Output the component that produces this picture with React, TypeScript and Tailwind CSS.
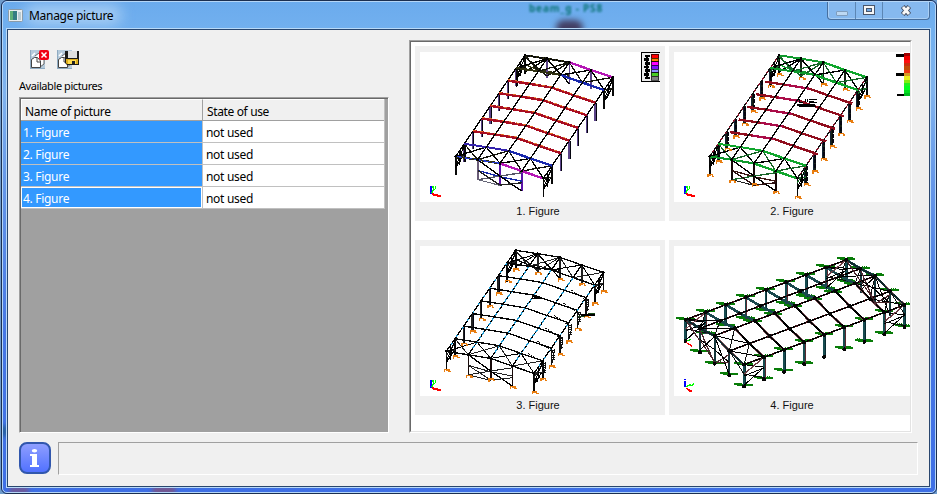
import React from "react";

type P = [number, number];

const lerp = (a: P, b: P, t: number): P => [a[0] + (b[0] - a[0]) * t, a[1] + (b[1] - a[1]) * t];
const path = (...pts: P[]) => "M" + pts.map((p) => p.join(",")).join("L");
const down = (p: P, h: number, dx = 0): P => [p[0] + dx, p[1] + h];

const Line = ({ pts, c = "#000", w = 4, dash }: { pts: P[]; c?: string; w?: number; dash?: string }) => (
  <path d={path(...pts)} stroke={c} strokeWidth={w} strokeDasharray={dash} fill="none" />
);

type Theme = {
  dx: number;
  rafter: string;
  rafterW: number;
  accent: string;
  end: string;
  endAlt: string;
  column: string;
  brace: string;
  feet: boolean;
  purlin?: string;
};

const bases: P[] = [[345, 46], [411, 56], [478, 67], [543, 90], [608, 112]];

// Axonometric view of the hall: nine frames, five nodes per frame.
function Hall({ t, kind }: { t: Theme; kind: 1 | 2 | 3 }) {
  const n = (i: number, k: number): P => [bases[i][0] - 26 * k + t.dx, bases[i][1] + 37.9 * k];
  const frame = (k: number) => [0, 1, 2, 3, 4].map((i) => n(i, k));
  const foot = (p: P, key: string) => (
    <path key={key} d={`M${p[0] - 5},${p[1] + 7}v-8h13v5h6M${p[0] - 2},${p[1]}h7`} stroke="#e87d10" strokeWidth={4} fill="none" />
  );
  const feet: P[] = [];
  for (let k = 1; k < 8; k++) feet.push(down(n(0, k), 53), down(n(4, k), 55));
  [0, 1, 2, 3, 4].forEach((i) => feet.push(down(n(i, 0), i === 2 ? 66 : 57), down(n(i, 8), i === 0 ? 56 : i === 4 ? 56 : 63)));
  const off = kind === 2 ? 9 : 0;
  const wallW = kind === 3 ? 3 : 4;
  return (
    <g>
      {/* side columns */}
      {[1, 2, 3, 4, 5, 6, 7].map((k) => (
        <g key={k}>
          {[0, 4].map((i) => {
            const p = n(i, k);
            return (
              <g key={i}>
                {kind === 3 && i === 4 && k > 1 ? (
                  <>
                    <path d={path(p, down(p, 52))} stroke="#111" strokeWidth={4} />
                    <path d={path(down(p, 4, 9), down(p, 25, 7), down(p, 48, 1))} stroke="#111" strokeWidth={3} fill="none" />
                    {[7, 14, 21, 28, 35].map((h) => <path key={h} d={path(down(p, h, -2), down(p, h, 10))} stroke="#111" strokeWidth={3} />)}
                    <path d={path(down(n(3, k), 0, 22), down(p, 10, 5))} stroke="#111" strokeWidth={3} strokeDasharray="5 3" />
                  </>
                ) : (
                  <>
                    <path d={path(p, down(p, 54))} stroke={t.column} strokeWidth={7} />
                    <path d={path(down(p, 2, 2), down(p, 54, 2))} stroke="#050510" strokeWidth={kind === 2 ? 6 : 3} strokeDasharray={kind === 2 ? "12 4" : undefined} />
                    {kind === 2 && <path d={path(down(p, 4, -3), down(p, 52, -4))} stroke="#123" strokeWidth={3} />}
                  </>
                )}
              </g>
            );
          })}
        </g>
      ))}
      {/* lattice of the corner bays */}
      {[[0, 0], [0, 7], [4, 0], [4, 7]].map(([i, k]) => {
        const a = n(i, k), b = n(i, k + 1);
        return (
          <g key={`${i}${k}`}>
            <Line pts={[a, down(a, 56)]} w={5} c="#080808" />
            <Line pts={[b, down(b, 56)]} w={5} c="#080808" />
            <Line pts={[down(a, 12), down(b, 12)]} c={t.brace} w={3} />
            <Line pts={[down(a, 31), down(b, 31)]} w={3} />
            <Line pts={[down(a, 5), down(b, 30)]} w={3} />
            <Line pts={[b, down(a, 34)]} c={t.brace} w={4} />
            <Line pts={[down(b, 34), lerp(down(a, 34), down(b, 34), 0.4), lerp(a, b, 0.5), down(lerp(a, b, 0.55), 42)]} w={3} />
          </g>
        );
      })}
      {/* gable walls */}
      <Line pts={[down(n(0, 0), 44), down(n(1, 0), 36), down(n(2, 0), 44)]} c={t.endAlt} w={3} />
      {[1, 2, 3].map((i) => <Line key={i} pts={[n(i, 0), down(n(i, 0), i === 2 ? 66 : 58)]} c={t.column} w={5} />)}
      {[1, 2, 3].map((i) => <Line key={i} pts={[n(i, 8), down(n(i, 8), i === 2 ? 66 : 61)]} c={kind === 1 ? (i === 1 ? "#6a5c78" : "#5b13a8") : "#160808"} w={5} />)}
      <Line pts={[down(n(1, 8), 32), down(n(2, 8), 40), down(n(3, 8), 30)]} c={kind === 1 ? "#1528a8" : kind === 2 ? "#3a1512" : t.brace} w={wallW} />
      <Line pts={[down(n(1, 8), 60), down(n(2, 8), 38), down(n(3, 8), 5)]} c={kind === 1 ? "#556" : t.brace} w={wallW} />
      <Line pts={[n(1, 8), down(n(2, 8), 38), down(n(3, 8), 60)]} w={4} />
      <Line pts={[down(n(1, 8), 32), down(n(2, 8), 65), down(n(3, 8), 35)]} c={kind === 1 ? "#222" : kind === 2 ? "#2c1010" : t.brace} w={wallW} />
      <Line pts={[down(n(1, 8), 60), down(n(2, 8), 66)]} c={kind === 1 ? "#667" : "#222"} w={3} />
      <Line pts={[down(n(0, 0), 4), down(n(1, 0), 52), n(2, 0)]} c={t.brace} w={wallW} />
      <Line pts={[down(n(0, 0), 50), n(1, 0), down(n(2, 0), 64)]} w={wallW} />
      <Line pts={[down(n(0, 0), 28), down(n(1, 0), 44), down(n(2, 0), 38)]} c={t.endAlt} />
      {/* end-bay roof bracing */}
      {[0, 7].map((k) =>
        [0, 1, 2, 3].map((i) => (
          <g key={`${k}${i}`}>
            <Line pts={[n(i, k), n(i + 1, k + 1)]} w={wallW} c={i % 2 ? "#000" : t.brace} />
            <Line pts={[n(i + 1, k), n(i, k + 1)]} w={wallW} c={i % 2 ? t.brace : "#000"} />
          </g>
        ))
      )}
      {/* purlins */}
      {[0, 1, 2, 3, 4].map((i) => (
        <g key={i}>
          <Line pts={[n(i, 0), n(i, 8)]} c={kind === 2 && (i === 0 || i === 4) ? "#821328" : "#000"} w={4} />
          {t.purlin && <Line pts={[n(i, 1), n(i, 7.6)]} c={t.purlin} w={4} dash={i === 0 || i === 4 ? "7 22" : "10 7"} />}
          {kind === 2 && <Line pts={[n(i, 0), n(i, 8)]} c="#111" w={4} dash="14 8" />}
        </g>
      ))}
      {/* main rafters */}
      {[2, 3, 4, 5, 6].map((k) => {
        const arch = frame(k).map((p): P => [p[0] + off, p[1] + (off ? 3 : 0)]);
        return (
          <g key={k}>
            <Line pts={arch} c={t.rafter} w={t.rafterW} />
            {kind === 1 && <Line pts={arch.map((p): P => [p[0], p[1] - 3])} c={t.accent} w={2.5} dash="9 12" />}
            {kind === 2 && <Line pts={[arch[1], arch[2]]} c={t.accent} w={7} />}
          </g>
        );
      })}
      {/* end frames */}
      {[0, 1, 7, 8].map((k) => {
        const f = frame(k);
        const inner = k === 1 || k === 7;
        return (
          <g key={k}>
            <Line pts={f.slice(0, 3)} c={inner && k === 7 ? t.end : t.endAlt} w={kind === 3 ? 4 : 6} />
            <Line pts={f.slice(2)} c={kind === 1 ? (inner ? "#1828ad" : "#b516b5") : t.end} w={kind === 3 ? 4 : 7} />
          </g>
        );
      })}
      {kind === 1 && <Line pts={[n(0, 8), n(1, 8), n(2, 8)]} c="#263bd0" w={4} dash="20 8" />}
      {kind === 1 && <Line pts={[n(0, 0), n(1, 0), n(2, 0)]} c="#080808" w={5} dash="15 4" />}
      {/* purlins cross over the rafters */}
      {kind < 3 && [1, 2, 3].map((i) => <Line key={i} pts={[n(i, 0), n(i, 8)]} w={4} c="#050505" />)}
      {[0, 8].map((k) => frame(k).map((p, i) => <circle key={`${k}${i}`} cx={p[0]} cy={p[1]} r={4} />))}
      {t.feet && feet.map((p, i) => foot(p, String(i)))}
    </g>
  );
}

const themes: Record<1 | 2 | 3, Theme> = {
  1: { dx: 0, rafter: "#a80d22", rafterW: 7.5, accent: "#ed7a22", end: "#3322ad", endAlt: "#2f3010", column: "#5a4287", brace: "#15150c", feet: false },
  2: { dx: 0, rafter: "#900d1d", rafterW: 7, accent: "#aa0c48", end: "#0fa62c", endAlt: "#0f9a2c", column: "#152015", brace: "#176528", feet: true },
  3: { dx: -28, rafter: "#050505", rafterW: 4, accent: "#000", end: "#080808", endAlt: "#080808", column: "#222", brace: "#222", feet: true, purlin: "#229bd2" },
};

function Axes({ y }: { y: number }) {
  return (
    <g fill="none" strokeWidth={4}>
      <path d={`M63,${y - 24}v24`} stroke="#00f" strokeWidth={6} />
      <path d={`M65,${y - 2}l5,-9v-9M70,${y - 10}l6,-6v-7M67,${y - 21}h5`} stroke="#0f0" />
      <path d={`M65,${y}h5v3h13v3h10`} stroke="#f00" />
    </g>
  );
}

function Figure1() {
  const colors = ["#ff0000", "#ff8000", "#ff00ff", "#8010ff", "#8c8cff", "#48cc24", "#808080"];
  return (
    <>
      <Hall t={themes[1]} kind={1} />
      <Axes y={462} />
      <rect x={694} y={38} width={60} height={86} fill="#eee" stroke="#000" strokeWidth={3} />
      {colors.map((c, i) => (
        <g key={c}>
          <rect x={723} y={43 + i * 11} width={23} height={11} fill={c} stroke="#000" strokeWidth={2} />
          <path d={`M${i % 2 ? 703 : 706},${48 + i * 11}h14`} stroke="#000" strokeWidth={i % 3 ? 9 : 6} />
        </g>
      ))}
      <path d="M711,44v74" stroke="#000" strokeWidth={7} />
    </>
  );
}

function Figure2() {
  const colors = ["#a00000", "#f00000", "#ff1010", "#c83010", "#c04c08", "#ee3812", "#d89a28", "#e8ee20", "#80ed10", "#20f020", "#00ff20", "#00e020", "#00bc20"];
  return (
    <>
      <Hall t={themes[2]} kind={2} />
      <Axes y={462} />
      <path d="M402,178h5v9h11M424,178v9M430,178v9M436,178h22M434,184h16M434,188h24M400,195h54M405,200h50" stroke="#000" strokeWidth={4} fill="none" />
      {colors.map((c, i) => <rect key={c} x={720} y={39 + i * 10} width={22} height={10} fill={c} />)}
      <path d="M697,46h23M697,103h23M700,165h20" stroke="#000" strokeWidth={8} />
    </>
  );
}

function Figure3() {
  return (
    <>
      <Hall t={themes[3]} kind={3} />
      <Axes y={459} />
      <path d="M364,190h42M372,185h16" stroke="#000" strokeWidth={5} />
      <path d="M512,240h43" stroke="#000" strokeWidth={8} />
      <path d="M503,245h22M534,236h20" stroke="#184818" strokeWidth={3} />
    </>
  );
}

// Long side view with support labels at the nodes.
function Figure4() {
  const start: P[] = [[65, 254], [108, 280], [152, 302], [196, 348], [240, 389]];
  const n = (i: number, k: number): P => [start[i][0] + 60.2 * k, start[i][1] - 22.4 * k];
  const ks = [0, 1, 2, 3, 4, 5, 6, 7, 8];
  const label = ([x, y]: P, key: string) => (
    <g key={key} stroke="#087c08" fill="none">
      <path d={`M${x - 29},${y - 6}h24M${x - 20},${y - 3}h47`} strokeWidth={6} />
      <path d={`M${x - 23},${y - 8}h14M${x + 3},${y - 7}h17`} strokeWidth={3} strokeDasharray="4 2" />
    </g>
  );
  const dot = (p: P, key: string) => <circle key={key} cx={p[0]} cy={p[1]} r={6} fill="#050505" />;
  const tall = [64, 72, 84, 73, 65];
  return (
    <>
      {ks.map((k) => (
        <g key={k}>
          {label(n(0, k), "a")}
          {label(n(4, k), "b")}
          {k !== 4 && label(down(n(4, k), 65), "c")}
          {k > 0 && label(down(n(0, k), 65), "d")}
          {k > 1 && k < 8 && label([n(2, k)[0] - 5, n(2, k)[1] + 5], "e")}
        </g>
      ))}
      {[1, 2, 3].map((i) => <g key={i}>{label(down(n(i, 0), tall[i]), "a")}{label(n(i, 8), "b")}</g>)}
      {/* columns */}
      {ks.map((k) => (
        <g key={k}>
          {[0, 4].map((i) => (
            <g key={i}>
              <Line pts={[n(i, k), down(n(i, k), 65)]} c="#174c50" w={8} />
              <Line pts={[down(n(i, k), 0, 3), down(n(i, k), 65, 3)]} c={k % 2 ? "#5b2930" : "#092c31"} w={3} />
            </g>
          ))}
        </g>
      ))}
      {[0, 8].map((k) =>
        [1, 2, 3].map((i) => <Line key={`${k}${i}`} pts={[n(i, k), down(n(i, k), tall[i])]} c="#16383c" w={6} />)
      )}
      {/* frames */}
      {ks.map((k) => (
        <g key={k}>
          <Line pts={[n(0, k), n(1, k), n(2, k)]} c="#1a484d" w={8} />
          <Line pts={[n(2, k), n(3, k), n(4, k)]} c="#7d4e55" w={7} />
          <Line pts={[n(2, k), n(3, k), n(4, k)]} w={5} />
        </g>
      ))}
      {[0, 1, 2, 3, 4].map((i) => (
        <g key={i}>
          <Line pts={[n(i, 0), n(i, 8)]} c="#4a151b" w={5} />
          <Line pts={[n(i, 0), n(i, 8)]} w={4} dash="28 3" />
        </g>
      ))}
      {/* end bay bracing */}
      {[0, 7].map((k) =>
        [0, 1, 2, 3].map((i) => (
          <g key={`${k}${i}`}>
            <Line pts={[n(i, k), n(i + 1, k + 1)]} w={3} />
            <Line pts={[n(i + 1, k), n(i, k + 1)]} w={3} c="#111" />
          </g>
        ))
      )}
      {[0, 7].map((k) =>
        [0, 4].map((i) => {
          const a = n(i, k), b = n(i, k + 1);
          return (
            <g key={`${k}${i}`}>
              <Line pts={[a, down(b, 30), down(a, 62)]} w={3} />
              <Line pts={[down(a, 28), b]} c="#704047" w={4} />
              <Line pts={[down(a, 28), down(b, 62)]} c="#111" w={3} />
              <Line pts={[down(a, 34), down(b, 32)]} w={3} />
            </g>
          );
        })
      )}
      {/* gables */}
      {[0, 8].map((k) => (
        <g key={k}>
          <Line pts={[0, 1, 2, 3, 4].map((i) => n(i, k))} c="#10282b" w={5} />
          <Line pts={[down(n(1, k), 5), down(n(2, k), 84), down(n(3, k), 10)]} c="#4b2930" w={4} />
          <Line pts={[down(n(1, k), 65), down(n(2, k), 2), down(n(3, k), 72)]} w={3} />
          <Line pts={[down(n(1, k), 34), down(n(2, k), 42), down(n(3, k), 35)]} w={3} />
          <Line pts={[down(n(1, k), 34), down(n(2, k), 80), down(n(3, k), 35)]} c="#4a252a" w={3} />
          <Line pts={[n(0, k), down(n(1, k), 38)]} w={4} c="#4b2930" />
          <Line pts={[n(3, k), down(n(4, k), 28)]} w={3} c="#111" />
        </g>
      ))}
      {ks.map((k) => (
        <g key={k}>{dot(n(0, k), "a")}{dot(n(1, k), "m")}{dot(n(2, k), "b")}{dot(n(3, k), "n")}{dot(n(4, k), "c")}{dot(down(n(4, k), 66), "d")}</g>
      ))}
      {[0, 1, 2, 3].map((i) => dot(down(n(i, 0), tall[i]), String(i)))}
      <path d="M65,322l10,5l9,7" stroke="#f00" strokeWidth={4} fill="none" />
      <path d="M70,318l12,-5" stroke="#0d0" strokeWidth={4} />
      <path d="M63,457v-18M63,436v-5" stroke="#00f" strokeWidth={6} />
      <path d="M66,456l8,-4h8l7,-6M76,448h6" stroke="#0f0" strokeWidth={4} fill="none" />
      <path d="M65,458l7,6l5,4h7M76,463v6" stroke="#f00" strokeWidth={4} fill="none" />
    </>
  );
}

function Thumb({ label, top, children }: { label: string; top: number; children: React.ReactNode }) {
  return (
    <div className="flex h-[175px] w-[250px] shrink-0 flex-col items-center bg-[#f0f0f0] pt-[6px]">
      <svg className="block h-[150px] w-[240px] shrink-0 bg-white" viewBox={`30 ${top} 720 450`} shapeRendering="crispEdges">
        {children}
      </svg>
      <div className="pr-[4px] pt-[1px] font-['Liberation_Sans',Arial,sans-serif] text-[11px] leading-[16px] text-[#111]">{label}</div>
    </div>
  );
}

function DocIcon() {
  return (
    <>
      <rect x="0" y="0" width="15" height="19" fill="#b5cadb" />
      <path d="M0.5 0v19M0 18.5h15" stroke="#8fabc2" />
      <path d="M5 6l4-3 5 5v6l-4 3" fill="#fff" stroke="#666" />
      <path d="M1.5 9.5l3-2h3l3 3.5v6.5h-9z" fill="#fff" stroke="#444" />
      <path d="M7 8v4h3" fill="none" stroke="#444" />
      <path d="M2 6l3-3M9 3l3-2" stroke="#fff" strokeWidth="1.5" />
    </>
  );
}

function Toolbar() {
  return (
    <div className="flex h-[20px] gap-[7px]">
      <svg className="h-[20px] w-[20px]" viewBox="0 0 20 20">
        <DocIcon />
        <rect x="9" y="0" width="10" height="10" rx="2" fill="#f00012" />
        <path d="M11.5 2.5l5 5m0-5l-5 5" stroke="#fff" strokeWidth="1.5" />
      </svg>
      <svg className="h-[20px] w-[23px]" viewBox="0 0 23 20">
        <DocIcon />
        <path d="M8 1h14v14H10l-2-2z" fill="#1a1a1a" />
        <rect x="11" y="1" width="9" height="7" fill="#dedede" />
        <path d="M9 9h12v5H10l-1-1z" fill="#dcac1c" />
        <rect x="11" y="10" width="8" height="4" fill="#ffdc50" />
        <rect x="15" y="11" width="3" height="3" fill="#222" />
      </svg>
    </div>
  );
}

function WindowButtons() {
  return (
    <div className="flex h-[19px] w-[103px] rounded-b-[4px] border border-t-0 border-[#466f9f] bg-[#86b9ef] shadow-[inset_0_0_0_1px_#a9cff5]">
      <div className="flex w-[28px] items-center justify-center border-r border-[#5c86b4]">
        <div className="mt-[6px] h-[5px] w-[12px] rounded-[1px] border border-[#7f9dbd] bg-[#bcd8f3]" />
      </div>
      <div className="flex w-[27px] items-center justify-center border-r border-[#5c86b4]">
        <svg className="h-[10px] w-[12px]" viewBox="0 0 12 10" shapeRendering="crispEdges">
          <rect x=".5" y=".5" width="11" height="9" fill="#f6f6f6" stroke="#49566b" />
          <rect x="3.5" y="3.5" width="5" height="3" fill="#72a9e4" stroke="#49566b" />
        </svg>
      </div>
      <div className="flex flex-1 items-center justify-center">
        <svg className="h-[11px] w-[12px]" viewBox="0 0 12 11">
          <path d="M2.7 1.5l6.6 8M9.3 1.5L2.7 9.5" stroke="#465267" strokeWidth="4.8" />
          <path d="M3 2l6 7M9 2L3 9" stroke="#f7f7f7" strokeWidth="2.8" />
        </svg>
      </div>
    </div>
  );
}

const rows = ["1. Figure", "2. Figure", "3. Figure", "4. Figure"];

export default function App() {
  return (
    <div className="h-[494px] w-[937px] overflow-hidden bg-[#6e9bcc] pl-px font-['Noto_Sans','Segoe_UI',sans-serif] text-[12px] text-black">
      <div className="h-[494px] w-[936px] rounded-[6px] border border-[#1b2f50] bg-[#4474e5]">
        <div className="relative flex h-[492px] flex-col overflow-hidden rounded-[5px] border border-[#b5d6f7] bg-[linear-gradient(180deg,#6babed_0px,#72b0ef_28px,#80b3ee_90px,#6597e8_180px,#4677e4_330px,#3e6fe5_100%)] pl-[3px] pr-[4px]">
          {/* desktop tints showing through the glass frame */}
          <div className="absolute bottom-[-3px] left-[6px] h-[9px] w-[20px] rounded-full bg-[#8b4d6c] opacity-60 blur-[2px]" />
          <div className="absolute bottom-[-3px] left-[149px] h-[9px] w-[24px] rounded-full bg-[#8b4d6c] opacity-70 blur-[2px]" />
          <div className="absolute bottom-[55px] left-[-3px] h-[12px] w-[8px] rounded-full bg-[#1d5a86] opacity-70 blur-[2px]" />
          <div className="relative flex h-[26px] shrink-0 justify-between overflow-hidden">
            <div className="absolute left-[523px] top-0 whitespace-pre text-[10px] font-bold leading-[12px] tracking-[0.8px] text-[#0c7478] blur-[1.2px]">beam_g - PS8</div>
            <div className="absolute left-[550px] top-[18px] h-[16px] w-[27px] rounded-full bg-[#423e63] blur-[3px]" />
            <div className="absolute left-[18px] top-[3px] h-[20px] w-[98px] rounded-full bg-[#b9d8f6] opacity-75 blur-[7px]" />
            <div className="relative flex items-center gap-[6px] pl-[2px] pt-[1px]">
              <svg className="h-[13px] w-[15px]" viewBox="0 0 15 13">
                <rect x=".5" y=".5" width="14" height="12" rx="1" fill="#e9edf0" stroke="#8a9ba8" />
                <rect x="2" y="2" width="7" height="9" fill="#357d83" />
                <path d="M2 2h3v9H2" fill="#5faf78" />
                <rect x="10" y="3" width="3" height="8" fill="#bacbd2" />
              </svg>
              <span className="text-[12px] leading-[18px] tracking-[-0.3px]">Manage picture</span>
            </div>
            <div className="relative mr-[1px] mt-[-1px]"><WindowButtons /></div>
          </div>
          <div className="relative mb-[4px] flex-1 border border-[#b9daf8]">
            <div className="flex h-full flex-col border border-[#29466e] bg-[#f0f0f0]">
              <div className="flex h-[403px] shrink-0">
                <div className="w-[370px] shrink-0 pl-[11px] pt-[20px]">
                  <div className="pl-[11px]"><Toolbar /></div>
                  <div className="mt-[7px] h-[20px] text-[11px] leading-[18px] tracking-[-0.42px]">Available pictures</div>
                  <div className="h-[336px] w-[370px] border border-b-white border-l-[#a0a0a0] border-r-white border-t-[#a0a0a0]">
                    <div className="h-full border-l border-t border-[#696969] bg-[#a0a0a0]">
                      <div className="w-[364px] border-r border-[#c0c0c0] bg-white">
                        <div className="flex h-[22px] border-b border-[#a0a0a0] bg-[#f0f0f0] tracking-[-0.36px]">
                          <div className="w-[181px] border-l border-t border-white pl-[3px] leading-[23px]">Name of picture</div>
                          <div className="flex-1 border-l border-t border-[#a0a0a0] border-t-white pl-[4px] leading-[23px]">State of use</div>
                        </div>
                        {rows.map((r, i) => (
                          <div key={r} className="flex h-[22px] border-b border-[#c0c0c0] leading-[24px] tracking-[-0.3px]">
                            <div className={`w-[181px] bg-[#3399ff] text-white ${i === 3 ? "border border-white pl-[1px] leading-[22px]" : "pl-[2px]"}`}>{r}</div>
                            <div className="flex-1 border-l border-[#c0c0c0] pl-[3px]">not used</div>
                          </div>
                        ))}
                      </div>
                    </div>
                  </div>
                </div>
                <div className="ml-[31px] mt-[10px] h-[393px] w-[503px] shrink-0 border border-b-white border-l-[#a0a0a0] border-r-white border-t-[#a0a0a0]">
                  <div className="h-full overflow-hidden border border-b-[#e3e3e3] border-l-[#696969] border-r-[#e3e3e3] border-t-[#696969] bg-white pl-[4px] pt-[4px]">
                    <div className="flex w-max flex-col gap-[19px]">
                      <div className="flex gap-[4px]">
                        <Thumb label="1. Figure" top={36}><Figure1 /></Thumb>
                        <Thumb label="2. Figure" top={36}><Figure2 /></Thumb>
                      </div>
                      <div className="flex gap-[4px]">
                        <Thumb label="3. Figure" top={33}><Figure3 /></Thumb>
                        <Thumb label="4. Figure" top={33}><Figure4 /></Thumb>
                      </div>
                    </div>
                  </div>
                </div>
              </div>
              <div className="mt-[9px] flex gap-[7px] pl-[11px]">
                <svg className="h-[32px] w-[32px] shrink-0" viewBox="0 0 32 32">
                  <defs><linearGradient id="info" x2="0" y2="1"><stop stopColor="#91a0ff" /><stop offset="1" stopColor="#4f70ff" /></linearGradient></defs>
                  <rect x="1" y="1" width="30" height="30" rx="7" fill="url(#info)" stroke="#3157ad" strokeWidth="2" />
                  <ellipse cx="15.5" cy="8.7" rx="2.7" ry="1.8" fill="#fff" />
                  <path d="M11 12h7v11h2v2h-9v-2h2v-9h-2z" fill="#fff" />
                </svg>
                <div className="h-[33px] w-[860px] border border-b-white border-l-[#a0a0a0] border-r-white border-t-[#a0a0a0]" />
              </div>
            </div>
          </div>
        </div>
      </div>
    </div>
  );
}
